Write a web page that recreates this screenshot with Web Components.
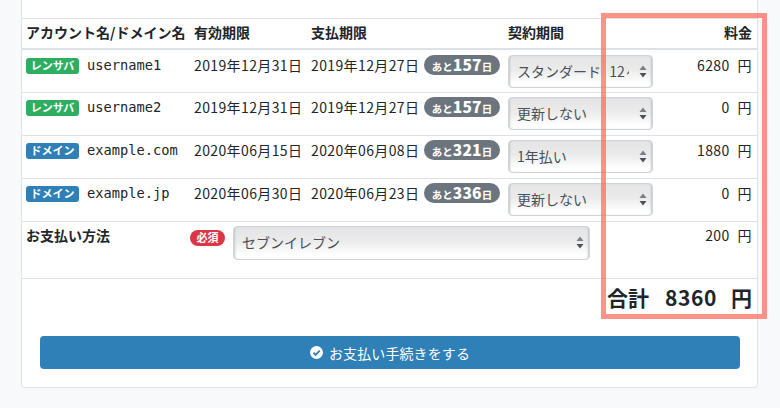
<!DOCTYPE html>
<html lang="ja">
<head>
<meta charset="utf-8">
<style>
  html, body { margin: 0; height: 408px; overflow: hidden; background: #f8f9fa; }
  body { font-family: "Noto Sans CJK JP", "Liberation Sans", sans-serif; font-size: 14px; color: #212529; position: relative; }
</style>
</head>
<body>
<order-card>
  <order-row head>
    <span>アカウント名/ドメイン名</span><span>有効期限</span><span>支払期限</span><span>契約期間</span><span slot="price">料金</span>
  </order-row>
  <order-row first>
    <service-item kind="rental" name="username1"></service-item>
    <span>2019年12月31日</span>
    <due-date date="2019年12月27日" days="157"></due-date>
    <fake-select style="word-spacing: 5px">スタンダード 12ヶ月払い</fake-select>
    <yen-price slot="price" value="6280"></yen-price>
  </order-row>
  <order-row>
    <service-item kind="rental" name="username2"></service-item>
    <span>2019年12月31日</span>
    <due-date date="2019年12月27日" days="157"></due-date>
    <fake-select>更新しない</fake-select>
    <yen-price slot="price" value="0"></yen-price>
  </order-row>
  <order-row>
    <service-item kind="domain" name="example.com"></service-item>
    <span>2020年06月15日</span>
    <due-date date="2020年06月08日" days="321"></due-date>
    <fake-select>1年払い</fake-select>
    <yen-price slot="price" value="1880"></yen-price>
  </order-row>
  <order-row>
    <service-item kind="domain" name="example.jp"></service-item>
    <span>2020年06月30日</span>
    <due-date date="2020年06月23日" days="336"></due-date>
    <fake-select>更新しない</fake-select>
    <yen-price slot="price" value="0"></yen-price>
  </order-row>
  <payment-row></payment-row>
  <total-row value="8360"></total-row>
  <pay-button>お支払い手続きをする</pay-button>
</order-card>
<mark-box></mark-box>

<script>
class OrderCard extends HTMLElement {
    constructor() {
        super();
        this.attachShadow({ mode: 'open' });
        this.shadowRoot.innerHTML = `
            <style>
                :host { display: block; box-sizing: border-box; width: 737px; height: 388px; margin-left: 21px;
                    background: #fff; border: 1px solid #dee2e6; border-top: 0; border-radius: 0 0 4px 4px; padding-top: 18px; }
            </style>
            <slot></slot>
        `;
    }
}

class OrderRow extends HTMLElement {
    constructor() {
        super();
        this.attachShadow({ mode: 'open' });
        this.shadowRoot.innerHTML = `
            <style>
                :host { display: grid; box-sizing: border-box; grid-template-columns: 168px 117px 197px 1fr auto;
                    height: 43px; padding: 4px 5px 0 4px; border-top: 1px solid #dee2e6; line-height: 21px; letter-spacing: .38px; }
                :host([head]) { height: 32px; padding-top: 3px; font-weight: 700; border-bottom: 2px solid #dee2e6; letter-spacing: 0; }
                :host([first]) { height: 42px; padding-top: 5px; border-top: 0; }
                ::slotted([slot=price]) { text-align: right; }
            </style>
            <slot></slot>
            <slot name="price"></slot>
        `;
    }
}

class ServiceItem extends HTMLElement {
    constructor() {
        super();
        this.attachShadow({ mode: 'open' });
    }

    connectedCallback() {
        const rental = this.getAttribute('kind') === 'rental';
        this.shadowRoot.innerHTML = `
            <style>
                :host { display: flex; align-items: flex-start; letter-spacing: 0; }
                .tag { width: 53px; height: 16px; margin-top: 3px; border-radius: 3px; color: #fff; font-size: 11px; font-weight: 700;
                    line-height: 15px; text-align: center; background: ${rental ? '#2dae60' : '#2e80b7'}; }
                .name { margin-left: 8px; font-family: "DejaVu Sans Mono", monospace; font-size: 13.7px; }
            </style>
            <span class="tag">${rental ? 'レンサバ' : 'ドメイン'}</span>
            <span class="name">${this.getAttribute('name')}</span>
        `;
    }
}

class DueDate extends HTMLElement {
    constructor() {
        super();
        this.attachShadow({ mode: 'open' });
    }

    connectedCallback() {
        this.shadowRoot.innerHTML = `
            <style>
                :host { display: flex; align-items: flex-start; }
                .left { position: absolute; display: block; width: 76px; height: 20px; margin-left: 113px; border-radius: 10px; background: #6c757d; color: #fff;
                    font-size: 10.5px; font-weight: 700; line-height: 19px; text-align: center; letter-spacing: 0; white-space: nowrap; }
                b { font-size: 15.5px; letter-spacing: .3px; }
            </style>
            <span>${this.getAttribute('date')}</span>
            <span class="left">あと<b>${this.getAttribute('days')}</b>日</span>
        `;
    }
}

class FakeSelect extends HTMLElement {
    constructor() {
        super();
        this.attachShadow({ mode: 'open' });
        this.shadowRoot.innerHTML = `
            <style>
                :host { display: block; box-sizing: border-box; position: relative; width: var(--w, 145px); height: var(--h, 33px);
                    border: 1px solid #ced4da; border-radius: 4px; color: #495057; letter-spacing: 0; line-height: 30px; overflow: hidden;
                    background: linear-gradient(#e4e4e4, #ebebeb 45%, #fff 88%); box-shadow: inset 2px 0 2px -1px #c4c7cb, inset -2px 0 2px -1px #c4c7cb; }
                .txt { display: block; margin: 0 23px 0 8px; overflow: hidden; white-space: nowrap; }
                svg { position: absolute; right: 5px; top: 9px; }
            </style>
            <span class="txt"><slot></slot></span>
            <svg width="8" height="13" viewBox="0 0 8 13"><path d="M4 .5 7.5 5H.5z" fill="#7a8086"/><path d="M4 12.5 .5 8h7z" fill="#4c5258"/></svg>
        `;
    }
}

class YenPrice extends HTMLElement {
    constructor() {
        super();
        this.attachShadow({ mode: 'open' });
    }

    connectedCallback() {
        this.shadowRoot.innerHTML = `
            <style>
                :host { display: block; white-space: nowrap; }
                span { margin-left: 8px; }
            </style>
            ${this.getAttribute('value')}<span>円</span>
        `;
    }
}

class PaymentRow extends HTMLElement {
    constructor() {
        super();
        this.attachShadow({ mode: 'open' });
        this.shadowRoot.innerHTML = `
            <style>
                :host { display: flex; box-sizing: border-box; height: 57px; padding: 4px 5px 0 4px; border-top: 1px solid #dee2e6; line-height: 21px; letter-spacing: .38px; }
                b { width: 164px; margin-top: -1px; letter-spacing: 0; }
                .req { width: 35px; height: 16px; margin-top: 4px; border-radius: 8px; background: #dc3545; color: #fff; font-size: 11px; font-weight: 700;
                    line-height: 15px; text-align: center; letter-spacing: 0; }
                fake-select { --w: 357px; --h: 34px; margin-left: 8px; }
                yen-price { margin: -1px 0 0 auto; }
            </style>
            <b>お支払い方法</b>
            <span class="req">必須</span>
            <fake-select>セブンイレブン</fake-select>
            <yen-price value="200"></yen-price>
        `;
    }
}

class TotalRow extends HTMLElement {
    constructor() {
        super();
        this.attachShadow({ mode: 'open' });
    }

    connectedCallback() {
        this.shadowRoot.innerHTML = `
            <style>
                :host { display: block; box-sizing: border-box; height: 38px; padding: 3px 5px 0 0; border-top: 1px solid #dee2e6;
                    font-size: 21px; font-weight: 700; line-height: 30px; text-align: right; white-space: nowrap; }
                span { margin-left: 14px; }
                .num { margin-left: 16px; letter-spacing: .6px; }
            </style>
            合計<span class="num">${this.getAttribute('value')}</span><span>円</span>
        `;
    }
}

class PayButton extends HTMLElement {
    constructor() {
        super();
        this.attachShadow({ mode: 'open' });
        this.shadowRoot.innerHTML = `
            <style>
                :host { display: flex; align-items: center; justify-content: center; gap: 6px; box-sizing: border-box; width: 700px; height: 33px;
                    margin: 20px 0 0 18px; background: #2e80b7; border-radius: 4px; color: #fff; letter-spacing: .1px; }
            </style>
            <svg width="13" height="13" viewBox="0 0 13 13"><circle cx="6.5" cy="6.5" r="6.5" fill="#fff"/><path d="M3.4 6.7 5.6 8.9 9.7 4.7" fill="none" stroke="#2e80b7" stroke-width="1.8"/></svg>
            <span><slot></slot></span>
        `;
    }
}

class MarkBox extends HTMLElement {
    constructor() {
        super();
        this.attachShadow({ mode: 'open' });
        this.shadowRoot.innerHTML = `
            <style>
                :host { display: block; position: absolute; left: 601px; top: 13px; width: 166px; height: 306px; box-sizing: border-box;
                    border: 5px solid rgba(255, 96, 80, .68); pointer-events: none; }
            </style>
        `;
    }
}

customElements.define('order-card', OrderCard);
customElements.define('order-row', OrderRow);
customElements.define('service-item', ServiceItem);
customElements.define('due-date', DueDate);
customElements.define('fake-select', FakeSelect);
customElements.define('yen-price', YenPrice);
customElements.define('payment-row', PaymentRow);
customElements.define('total-row', TotalRow);
customElements.define('pay-button', PayButton);
customElements.define('mark-box', MarkBox);
</script>
</body>
</html>
